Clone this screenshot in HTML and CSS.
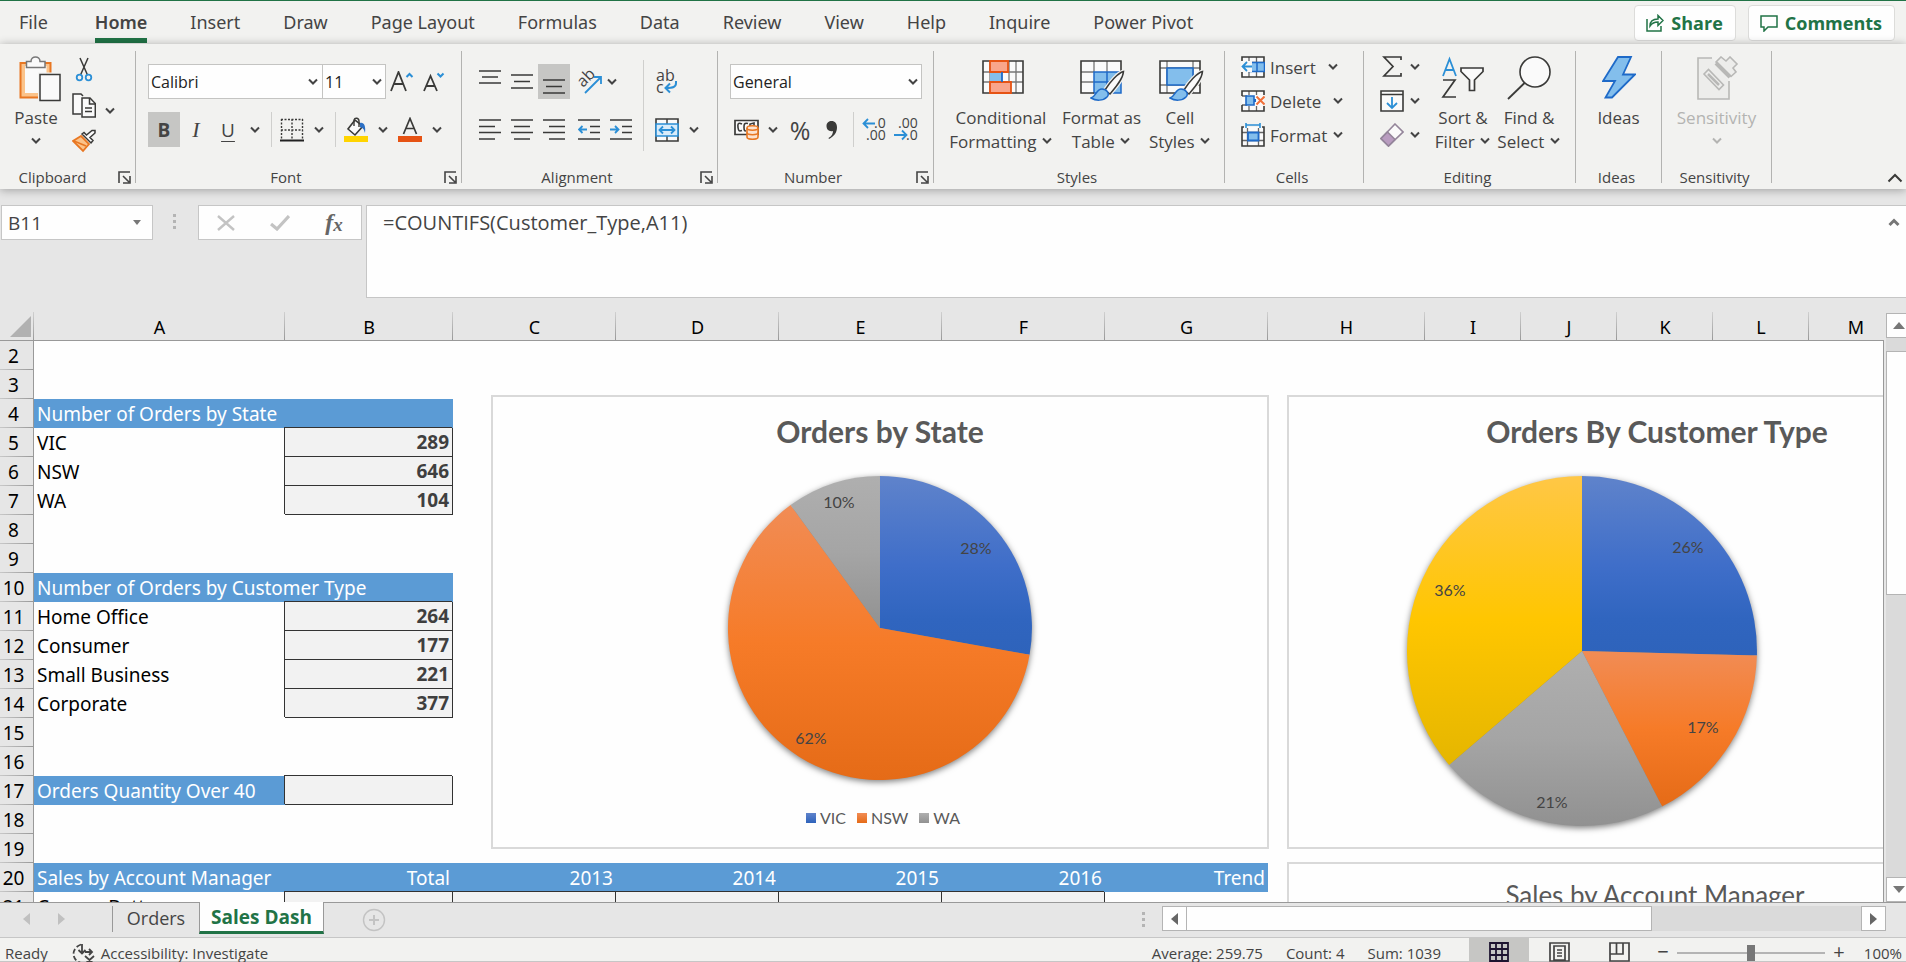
FILE: index.html
```html
<!DOCTYPE html>
<html lang="en">
<head>
<meta charset="utf-8">
<title>Sales Dash</title>
<link rel="stylesheet" href="styles.css">
</head>
<body>
<svg class="defs" width="0" height="0" aria-hidden="true">
  <symbol id="chev" viewBox="0 0 12 8"><path d="M2 1.5l4 4 4-4" fill="none" stroke="currentColor" stroke-width="2"/></symbol>
  <symbol id="launch" viewBox="0 0 13 13"><path d="M1 12V1h11M5 5l6 6M12 5v7H5" fill="none" stroke="#444" stroke-width="1.6"/></symbol>
  <symbol id="brush" viewBox="0 0 36 32"><path d="M33.500 1.500C28 3 20 12 15 20l5 4C26 17 33 9 33.500 1.500z" fill="#fafafa" stroke="#f2f2f0" stroke-width="4"/><path d="M33.500 1.500C28 3 20 12 15 20l5 4C26 17 33 9 33.500 1.500z" fill="#fafafa" stroke="#3a3a38" stroke-width="1.500"/><path d="M1 28c5-1 5-9 11-9 5 0 8 5 5 8-4 4-11 4-16 1z" fill="#83beec" stroke="#1e6ac8" stroke-width="1.500"/></symbol>
  <linearGradient id="blue" x2="0" y2="1"><stop offset="0" stop-color="#5f83cb"/><stop offset=".5" stop-color="#3f6ec9"/><stop offset=".8" stop-color="#3065bf"/><stop offset="1" stop-color="#2e63bb"/></linearGradient>
  <linearGradient id="orange" x2="0" y2="1"><stop offset="0" stop-color="#f18c55"/><stop offset=".5" stop-color="#f67b28"/><stop offset="1" stop-color="#e56b17"/></linearGradient>
  <linearGradient id="gray" x2="0" y2="1"><stop offset="0" stop-color="#afafaf"/><stop offset=".5" stop-color="#a5a5a5"/><stop offset="1" stop-color="#919191"/></linearGradient>
  <linearGradient id="gold" x2="0" y2="1"><stop offset="0" stop-color="#ffc746"/><stop offset=".5" stop-color="#ffc600"/><stop offset="1" stop-color="#e5b600"/></linearGradient>
</svg>

<header class="top">
  <nav class="tabs">
    <button>File</button><button class="on">Home</button><button>Insert</button><button>Draw</button><button>Page Layout</button><button>Formulas</button><button>Data</button><button>Review</button><button>View</button><button>Help</button><button>Inquire</button><button>Power Pivot</button>
  </nav>
  <div class="actions">
    <button class="action"><svg width="18" height="18" viewBox="0 0 18 18" fill="none" stroke="#217346" stroke-width="1.500"><path d="M1 5v12h14v-5"/><path d="M4 12c0-5 3-7 8-7V1.500l5 5-5 5V8c-4 0-6 1-8 4z"/></svg>Share</button>
    <button class="action"><svg width="18" height="18" viewBox="0 0 18 18" fill="none" stroke="#217346" stroke-width="1.500"><path d="M1 2h16v11H8l-4 4v-4H1z"/></svg>Comments</button>
  </div>
</header>

<section class="ribbon">
  <div class="group g-clip">
    <div class="body">
      <button class="big paste">
        <svg width="42" height="46" viewBox="0 0 42 46" fill="none"><path d="M1.500 7h30v34.500h-30z" fill="#fbc38a" stroke="#e87722" stroke-width="2"/><path d="M6 10h21.500v27H6z" fill="#fafafa"/><path d="M7.500 11.500V5.500H12c0-6 9-6 9 0h5v6z" fill="#fafafa" stroke="#777" stroke-width="1.500"/><path d="M21 18.500h20v26H21z" fill="#fafafa" stroke="#f2f2f0" stroke-width="4"/><path d="M21 18.500h20v26H21z" fill="#fafafa" stroke="#3a3a38" stroke-width="1.500"/></svg>
        <span>Paste</span><svg class="chev"><use href="#chev"/></svg>
      </button>
      <div class="stack">
        <button aria-label="Cut"><svg width="24" height="25" viewBox="0 0 24 25" fill="none"><path d="M8 1l7.500 17M16 1L8.500 18" stroke="#3a3a38" stroke-width="1.500"/><circle cx="7.500" cy="20.500" r="2.800" stroke="#2b8fd6" stroke-width="1.800"/><circle cx="16.500" cy="20.500" r="2.800" stroke="#2b8fd6" stroke-width="1.800"/></svg></button>
        <button aria-label="Copy"><svg width="24" height="25" viewBox="0 0 24 25" fill="#fafafa" stroke="#3a3a38" stroke-width="1.500"><path d="M9 21H1V1h8l2 2"/><path d="M10 5h8l5.300 5.500V24H10z"/><path d="M17.500 5v6h6M13 15h7M13 18.500h7" fill="none"/></svg></button>
        <button aria-label="Format Painter"><svg width="24" height="24" viewBox="0 0 24 24" fill="none"><path d="M9 7L1 12l10 10 6-7z" fill="#fbc38a" stroke="#e87722" stroke-width="1.800"/><path d="M2 12l12 5" stroke="#e87722" stroke-width="1.500"/><path d="M10 5l9 9 2-2.500-3-3L23 4V1.500h-3L14.500 6 12 3.500z" fill="#fafafa" stroke="#3a3a38" stroke-width="1.500"/></svg></button>
      </div>
      <button class="drop" aria-label="Copy options"><svg class="chev"><use href="#chev"/></svg></button>
    </div>
    <div class="cap"><span>Clipboard</span><svg class="launch"><use href="#launch"/></svg></div>
  </div>

  <div class="group g-font">
    <div class="body rows">
      <div class="row">
        <label class="combo w-font"><select aria-label="Font"><option>Calibri</option></select><svg class="chev"><use href="#chev"/></svg></label>
        <label class="combo w-size"><select aria-label="Font size"><option>11</option></select><svg class="chev"><use href="#chev"/></svg></label>
        <button class="tool" aria-label="Increase font size"><svg width="24" height="22" viewBox="0 0 24 22" fill="none"><path d="M1 20L8.500 1 16 20M4 13h9" stroke="#3a3a38" stroke-width="1.800"/><path d="M16.500 6l3-3 3 3" stroke="#2b8fd6" stroke-width="2"/></svg></button>
        <button class="tool" aria-label="Decrease font size"><svg width="22" height="22" viewBox="0 0 22 22" fill="none"><path d="M1 20L7.500 5 14 20M3.500 15h8" stroke="#3a3a38" stroke-width="1.800"/><path d="M14.500 2.500l3 3 3-3" stroke="#2b8fd6" stroke-width="2"/></svg></button>
      </div>
      <div class="row">
        <button class="tool on b">B</button><button class="tool i">I</button><button class="tool u">U</button><button class="drop" aria-label="Underline options"><svg class="chev"><use href="#chev"/></svg></button>
        <i class="sep"></i>
        <button class="tool" aria-label="Borders"><svg width="24" height="24" viewBox="0 0 24 24" fill="none" stroke="#3a3a38"><path d="M1 1.500h22M1 12h22M1.500 1v20M12 1v20M22.500 1v20" stroke-width="1.400" stroke-dasharray="2 1.500"/><path d="M0 22.500h24" stroke="#222" stroke-width="2"/></svg></button><button class="drop" aria-label="Border options"><svg class="chev"><use href="#chev"/></svg></button>
        <i class="sep"></i>
        <button class="tool" aria-label="Fill color"><svg width="24" height="25" viewBox="0 0 24 25" fill="none"><path d="M11 3L4 12l7 6 8-9z" fill="#fafafa" stroke="#3a3a38" stroke-width="1.600"/><path d="M10 9V3c1-3 5-2 5 1v6" stroke="#3a3a38" stroke-width="1.400"/><path d="M16 6c4-1 6 3 5 10-1-4-2-5-5-6z" fill="#2b6fc4"/><path d="M0 19h24v6H0z" fill="#ffd400"/></svg></button><button class="drop" aria-label="Fill options"><svg class="chev"><use href="#chev"/></svg></button>
        <button class="tool" aria-label="Font color"><svg width="24" height="25" viewBox="0 0 24 25" fill="none"><path d="M5.500 17L12 1.500 18.500 17M8 11.500h8" stroke="#3a3a38" stroke-width="1.700"/><path d="M0 19h24v6H0z" fill="#e65314"/></svg></button><button class="drop" aria-label="Font color options"><svg class="chev"><use href="#chev"/></svg></button>
      </div>
    </div>
    <div class="cap"><span>Font</span><svg class="launch"><use href="#launch"/></svg></div>
  </div>

  <div class="group g-align">
    <div class="body cols">
      <div class="rows">
        <div class="row">
          <button class="tool" aria-label="Top align"><svg width="22" height="24" viewBox="0 0 22 24" stroke="#3a3a38" stroke-width="1.600"><path d="M0 1h22M3 7h16M0 13h22"/></svg></button><button class="tool" aria-label="Middle align"><svg width="22" height="24" viewBox="0 0 22 24" stroke="#3a3a38" stroke-width="1.600"><path d="M0 5h22M3 11.500h16M0 18h22"/></svg></button><button class="tool on" aria-label="Bottom align"><svg width="22" height="24" viewBox="0 0 22 24" stroke="#3a3a38" stroke-width="1.600"><path d="M0 10h22M3 16.500h16M0 23h22"/></svg></button>
          <button class="split" aria-label="Orientation"><svg class="glyph" width="25" height="25" viewBox="0 0 25 25" fill="none"><text transform="translate(6 19) rotate(-45)" font-size="16" fill="#444">ab</text><path d="M8 24L24 8M17 8h7v7" stroke="#2b8fd6" stroke-width="1.800"/></svg><svg class="chev"><use href="#chev"/></svg></button>
        </div>
        <div class="row">
          <button class="tool" aria-label="Align left"><svg width="22" height="21" viewBox="0 0 22 21" stroke="#3a3a38" stroke-width="1.600"><path d="M0 1h22M0 7.500h16M0 13.500h22M0 20h16"/></svg></button><button class="tool" aria-label="Center"><svg width="22" height="21" viewBox="0 0 22 21" stroke="#3a3a38" stroke-width="1.600"><path d="M0 1h22M3 7.500h16M0 13.500h22M3 20h16"/></svg></button><button class="tool" aria-label="Align right"><svg width="22" height="21" viewBox="0 0 22 21" stroke="#3a3a38" stroke-width="1.600"><path d="M0 1h22M6 7.500h16M0 13.500h22M6 20h16"/></svg></button><i class="gap"></i><button class="tool" aria-label="Decrease indent"><svg width="22" height="21" viewBox="0 0 22 21" fill="none" stroke="#3a3a38" stroke-width="1.600"><path d="M0 1h22M12 7.500h10M12 13.500h10M0 20h22"/><path d="M9 10.500H1M4.500 7L1 10.500 4.500 14" stroke="#2b8fd6" stroke-width="1.800"/></svg></button><button class="tool" aria-label="Increase indent"><svg width="22" height="21" viewBox="0 0 22 21" fill="none" stroke="#3a3a38" stroke-width="1.600"><path d="M0 1h22M12 7.500h10M12 13.500h10M0 20h22"/><path d="M0 10.500h8M5 7l3.500 3.500L5 14" stroke="#2b8fd6" stroke-width="1.800"/></svg></button>
        </div>
      </div>
      <i class="sep tall"></i>
      <div class="rows">
        <div class="row">
          <button class="tool" aria-label="Wrap text"><svg class="glyph" width="22" height="26" viewBox="0 0 22 26" fill="none"><text x="0" y="12" font-size="16" fill="#444">ab</text><text x="0" y="24" font-size="16" fill="#444">c</text><path d="M20 12v2c0 4-3 5-10 5M14 14.500L9.500 19l4.500 4.500" stroke="#2b8fd6" stroke-width="2"/></svg></button>
        </div>
        <div class="row">
          <button class="tool" aria-label="Merge and center"><svg width="24" height="24" viewBox="0 0 24 24" fill="none"><path d="M1 1h22v22H1z" fill="#fafafa" stroke="#3a3a38" stroke-width="1.600"/><path d="M12 1v5M12 18v5" stroke="#3a3a38" stroke-width="1.400"/><path d="M1 6h22v12H1z" fill="#d9ecfa" stroke="#2b8fd6" stroke-width="1.600"/><path d="M4.500 12h15M8 8.500L4.500 12 8 15.500M16 8.500l3.500 3.500-3.500 3.500" stroke="#2b8fd6" stroke-width="1.800"/></svg></button><button class="drop" aria-label="Merge options"><svg class="chev"><use href="#chev"/></svg></button>
        </div>
      </div>
    </div>
    <div class="cap"><span>Alignment</span><svg class="launch"><use href="#launch"/></svg></div>
  </div>

  <div class="group g-num">
    <div class="body rows">
      <div class="row"><label class="combo w-num"><select aria-label="Number format"><option>General</option></select><svg class="chev"><use href="#chev"/></svg></label></div>
      <div class="row">
        <button class="tool" aria-label="Accounting format"><svg width="25" height="21" viewBox="0 0 25 21" fill="none"><path d="M1 1.500h23v14H1z" fill="#fafafa" stroke="#3a3a38" stroke-width="1.700"/><path d="M8 5C4 3 3.500 5 4 8.500s1 4 4 3M14 4.500c-4-1-4 1-4 4s1 4 2 3M16 8V5l4-1v3" stroke="#3a3a38" stroke-width="1.600"/><path d="M13 9c0-3 11-3 11 0v9c0 3-11 3-11 0z" fill="#fce3d0" stroke="#e87722" stroke-width="1.600"/><path d="M13 9c0 3 11 3 11 0M13 13.500c0 3 11 3 11 0" stroke="#e87722" stroke-width="1.600"/></svg></button><button class="drop" aria-label="Accounting options"><svg class="chev"><use href="#chev"/></svg></button>
        <button class="tool pct">%</button><button class="tool" aria-label="Comma style"><svg width="12" height="20" viewBox="0 0 12 20"><path d="M5.500 1C9 1 11 3.500 11 7.500c0 5-3 9-8 11.500l-.5-1C6 16 7 13.500 7 11 3 12 .5 9.500.5 6S3 1 5.500 1z" fill="#3a3a38"/></svg></button>
        <i class="sep"></i>
        <button class="tool" aria-label="Increase decimal"><svg class="glyph" width="24" height="25" viewBox="0 0 24 25" fill="none"><path d="M13 6.500H1M6 2L1.500 6.500 6 11" stroke="#2b8fd6" stroke-width="1.800"/><text x="12" y="11" font-size="14" fill="#444">.0</text><text x="4" y="23" font-size="14" fill="#444">.00</text></svg></button><button class="tool" aria-label="Decrease decimal"><svg class="glyph" width="24" height="25" viewBox="0 0 24 25" fill="none"><text x="4" y="11" font-size="14" fill="#444">.00</text><text x="12" y="23" font-size="14" fill="#444">.0</text><path d="M0 18h12M8 13.500l4.500 4.500L8 22.500" stroke="#2b8fd6" stroke-width="1.800"/></svg></button>
      </div>
    </div>
    <div class="cap"><span>Number</span><svg class="launch"><use href="#launch"/></svg></div>
  </div>

  <div class="group g-styles">
    <div class="body cols">
      <button class="big w104">
        <svg width="42" height="46" viewBox="0 0 42 46" fill="none"><path d="M1 5h40v32H1z" fill="#fafafa"/><path d="M1 16h40M1 26h40M8 5v32M27 5v32M34 5v32" stroke="#777" stroke-width="1.300"/><path d="M1 5h40v32H1z" stroke="#3a3a38" stroke-width="1.600"/><path d="M8 5h18v11H8zM8 26h21v11H8z" fill="#f9a58b" stroke="#e65314" stroke-width="1.800"/><path d="M8 17h12v8H8z" fill="#83beec"/><path d="M20 16v10" stroke="#1e6ac8" stroke-width="1.800"/></svg>
        <span>Conditional</span><span>Formatting <svg class="chev"><use href="#chev"/></svg></span>
      </button>
      <button class="big w97">
        <svg width="46" height="46" viewBox="0 0 46 46" fill="none"><path d="M1 5h40v32H1z" fill="#fafafa"/><path d="M14 16h27v21H14z" fill="#83beec"/><path d="M1 16h13M1 26h13M14 5v11M27 5v11" stroke="#777" stroke-width="1.300"/><path d="M14 16h27v21H14zM14 26h27M27 16v21" stroke="#1e6ac8" stroke-width="1.500"/><path d="M14 37H1V5h40v11" stroke="#3a3a38" stroke-width="1.600"/><use href="#brush" x="10" y="14" width="36" height="32"/></svg>
        <span>Format as</span><span>Table <svg class="chev"><use href="#chev"/></svg></span>
      </button>
      <button class="big w60">
        <svg width="46" height="46" viewBox="0 0 46 46" fill="none"><path d="M1 5h40v32H1z" fill="#fafafa"/><path d="M1 12h40M1 29h40M8 5v32M34 5v32" stroke="#777" stroke-width="1.300"/><path d="M1 5h40v32H1z" stroke="#3a3a38" stroke-width="1.600"/><path d="M8 12h26v17H8z" fill="#83beec" stroke="#1e6ac8" stroke-width="1.600"/><use href="#brush" x="10" y="14" width="36" height="32"/></svg>
        <span>Cell</span><span>Styles <svg class="chev"><use href="#chev"/></svg></span>
      </button>
    </div>
    <div class="cap"><span>Styles</span></div>
  </div>

  <div class="group g-cells">
    <div class="body list">
      <button><svg width="24" height="24" viewBox="0 0 24 24" fill="none"><path d="M1 2h22v20H1z" fill="#fafafa"/><path d="M8 2v20M15.500 2v20M1 16h22M1 7.500h22" stroke="#666" stroke-width="1.300"/><path d="M1 6V2h22v20H1v-5" stroke="#3a3a38" stroke-width="1.600"/><path d="M8 7.500h15.500v9H8z" fill="#83beec" stroke="#1e6ac8" stroke-width="1.500"/><path d="M16 7.500v9" stroke="#1e6ac8" stroke-width="1.500"/><path d="M0 6h11v11H0z" fill="#f8f8f7"/><path d="M11 11.500H1M6 7l-4.500 4.500L6 16" stroke="#2b8fd6" stroke-width="1.800"/></svg><span>Insert</span><svg class="chev far"><use href="#chev"/></svg></button>
      <button><svg width="24" height="24" viewBox="0 0 24 24" fill="none"><path d="M1 2h22v20H1z" fill="#fafafa"/><path d="M8 2v4M15.500 2v4M8 17v5M15.500 17v5M1 7h5M1 16h5" stroke="#666" stroke-width="1.300"/><path d="M1 7V2h22v4M1 16v6h22v-5" stroke="#3a3a38" stroke-width="1.600"/><path d="M5 7h8v9H5z" fill="#83beec" stroke="#1e6ac8" stroke-width="1.600"/><path d="M13 11.500h2" stroke="#1e6ac8" stroke-width="3"/><path d="M15.500 7.500l8 8M23.500 7.500l-8 8" stroke="#f0703a" stroke-width="2"/></svg><span>Delete</span><svg class="chev far"><use href="#chev"/></svg></button>
      <button><svg width="24" height="24" viewBox="0 0 24 24" fill="none"><path d="M1 4h22v19H1z" fill="#fafafa"/><path d="M6.500 5v18M17.500 5v18M1 9.500h22M1 17.500h22" stroke="#666" stroke-width="1.300"/><path d="M3 4H1v19h22V4h-2" stroke="#3a3a38" stroke-width="1.600"/><path d="M7 9.500h10.500v8H7z" fill="#83beec" stroke="#1e6ac8" stroke-width="1.800"/><path d="M5 2h14M5 0v5M19 0v5" stroke="#2b8fd6" stroke-width="1.600"/></svg><span>Format</span><svg class="chev"><use href="#chev"/></svg></button>
    </div>
    <div class="cap"><span>Cells</span></div>
  </div>

  <div class="group g-edit">
    <div class="body cols">
      <div class="list">
        <button aria-label="AutoSum"><svg width="24" height="24" viewBox="0 0 24 24" fill="none"><path d="M21 5V2H4l9 9.500L4 21h17v-3" stroke="#3a3a38" stroke-width="1.700"/></svg><svg class="chev"><use href="#chev"/></svg></button>
        <button aria-label="Fill"><svg width="24" height="24" viewBox="0 0 24 24" fill="none"><path d="M1 2h22v20H1zM1 5.500h22" fill="#fafafa" stroke="#3a3a38" stroke-width="1.600"/><path d="M12 8v10.500M7 14l5 5 5-5" stroke="#2b8fd6" stroke-width="1.800"/></svg><svg class="chev"><use href="#chev"/></svg></button>
        <button aria-label="Clear"><svg width="24" height="24" viewBox="0 0 24 24" fill="none"><path d="M15 1l8 8L8.500 23l-7.500-7.500z" fill="#fafafa" stroke="#94859a" stroke-width="1.600"/><path d="M7.500 9l7.500 7.500L8.500 23 1 15.500z" fill="#b99cc0" stroke="#94859a" stroke-width="1.600"/></svg><svg class="chev"><use href="#chev"/></svg></button>
      </div>
      <button class="big w66">
        <svg width="44" height="46" viewBox="0 0 44 46" fill="none"><path d="M2 20L8.500 3 15 20M4 14h9" stroke="#2b8fd6" stroke-width="1.800"/><path d="M2 24h12L2 41h13" stroke="#3a3a38" stroke-width="1.700"/><path d="M20 12h22v3.500L33.500 24v10.500h-5V24L20 15.500z" fill="#fafafa" stroke="#3a3a38" stroke-width="1.700"/></svg>
        <span>Sort &amp;</span><span>Filter <svg class="chev"><use href="#chev"/></svg></span>
      </button>
      <button class="big w66">
        <svg width="46" height="46" viewBox="0 0 46 46" fill="none"><circle cx="29" cy="16" r="15" fill="#fafafa" stroke="#3a3a38" stroke-width="1.600"/><path d="M18.500 27L2 43" stroke="#3a3a38" stroke-width="1.800"/></svg>
        <span>Find &amp;</span><span>Select <svg class="chev"><use href="#chev"/></svg></span>
      </button>
    </div>
    <div class="cap"><span>Editing</span></div>
  </div>

  <div class="group g-ideas">
    <div class="body cols mid">
      <button class="big">
        <svg width="34" height="46" viewBox="0 0 34 46"><path d="M16 1h13L21 18.500h12L10 41.500H3.500L13 25H1z" fill="#83beec" stroke="#1e6ac8" stroke-width="1.800"/></svg>
        <span>Ideas</span>
      </button>
    </div>
    <div class="cap"><span>Ideas</span></div>
  </div>

  <div class="group g-sens">
    <div class="body cols mid">
      <button class="big" disabled>
        <svg width="44" height="46" viewBox="0 0 44 46" fill="#ededeb" stroke="#b8b8b6" stroke-width="1.600"><path d="M17 2H3v41h31V25"/><path d="M9 18l4.500-4.500L28.500 29 24 33.500z"/><path d="M13 18l11 11" stroke-width="2.500"/><path d="M31 5l4-4 7 7-4 4 3 4-5 4.500L21 6l5-5z"/><path d="M21 7l14 14" stroke-width="4"/></svg>
        <span>Sensitivity</span><svg class="chev"><use href="#chev"/></svg>
      </button>
    </div>
    <div class="cap"><span>Sensitivity</span></div>
  </div>

  <button class="collapse" aria-label="Collapse ribbon"><svg width="16" height="10" viewBox="0 0 16 10" fill="none"><path d="M1.500 8.500L8 2l6.500 6.500" stroke="#3a3a38" stroke-width="2"/></svg></button>
</section>

<section class="formula">
  <div class="namebox"><input aria-label="Name box" value="B11"><svg width="10" height="5" viewBox="0 0 10 5"><path d="M1 0h8L5 5z" fill="#777"/></svg></div>
  <i class="dots"></i>
  <div class="fx">
    <button aria-label="Cancel"><svg width="18" height="16" viewBox="0 0 18 16"><path d="M1 1l16 14M17 1L1 15" stroke="#c3c3c3" stroke-width="2.400"/></svg></button>
    <button aria-label="Enter"><svg width="20" height="16" viewBox="0 0 20 16" fill="none"><path d="M1 9l6 5L19 1" stroke="#c3c3c3" stroke-width="3.200"/></svg></button>
    <button class="fn" aria-label="Insert function">f<small>x</small></button>
  </div>
  <div class="bar"><textarea aria-label="Formula bar">=COUNTIFS(Customer_Type,A11)</textarea><svg width="12" height="9" viewBox="0 0 12 9" fill="none"><path d="M1.500 7L6 2.500 10.500 7" stroke="#777" stroke-width="3"/></svg></div>
</section>

<main class="sheet">
  <div class="pane">
    <table>
      <colgroup><col class="c-row"><col class="c-a"><col class="c-b"><col class="c-c"><col class="c-c"><col class="c-c"><col class="c-c"><col class="c-c"><col class="c-h"><col class="c-i"><col class="c-i"><col class="c-i"><col class="c-i"><col></colgroup>
      <thead><tr><th><svg width="22" height="22" viewBox="0 0 22 22"><path d="M22 0v21H1z" fill="#b1b1b1"/></svg></th><th>A</th><th>B</th><th>C</th><th>D</th><th>E</th><th>F</th><th>G</th><th>H</th><th>I</th><th>J</th><th>K</th><th>L</th><th>M</th></tr></thead>
      <tbody>
        <tr><th>2</th><td colspan="13"></td></tr>
        <tr><th>3</th><td colspan="13"></td></tr>
        <tr><th>4</th><td class="head" colspan="2">Number of Orders by State</td><td colspan="11"></td></tr>
        <tr><th>5</th><td>VIC</td><td class="box">289</td><td colspan="11"></td></tr>
        <tr><th>6</th><td>NSW</td><td class="box">646</td><td colspan="11"></td></tr>
        <tr><th>7</th><td>WA</td><td class="box">104</td><td colspan="11"></td></tr>
        <tr><th>8</th><td colspan="13"></td></tr>
        <tr><th>9</th><td colspan="13"></td></tr>
        <tr><th>10</th><td class="head" colspan="2">Number of Orders by Customer Type</td><td colspan="11"></td></tr>
        <tr><th>11</th><td>Home Office</td><td class="box">264</td><td colspan="11"></td></tr>
        <tr><th>12</th><td>Consumer</td><td class="box">177</td><td colspan="11"></td></tr>
        <tr><th>13</th><td>Small Business</td><td class="box">221</td><td colspan="11"></td></tr>
        <tr><th>14</th><td>Corporate</td><td class="box">377</td><td colspan="11"></td></tr>
        <tr><th>15</th><td colspan="13"></td></tr>
        <tr><th>16</th><td colspan="13"></td></tr>
        <tr><th>17</th><td class="head">Orders Quantity Over 40</td><td class="box"></td><td colspan="11"></td></tr>
        <tr><th>18</th><td colspan="13"></td></tr>
        <tr><th>19</th><td colspan="13"></td></tr>
        <tr><th>20</th><td class="head">Sales by Account Manager</td><td class="head num">Total</td><td class="head num">2013</td><td class="head num">2014</td><td class="head num">2015</td><td class="head num">2016</td><td class="head num">Trend</td><td colspan="6"></td></tr>
        <tr><th>21</th><td>Connor Betts</td><td class="box"></td><td class="box"></td><td class="box"></td><td class="box"></td><td class="box"></td><td></td><td colspan="6"></td></tr>
      </tbody>
    </table>
    <div class="charts">
      <figure class="chart one">
        <figcaption>Orders by State</figcaption>
        <svg width="320" height="332" viewBox="-160 -166 320 332">
          <g class="pie"><path fill="url(#blue)" d="M0 0V-152A152 152 0 0 1 149.600 26.700z"/><path fill="url(#orange)" d="M0 0L149.600 26.700A152 152 0 1 1 -89.400 -122.900z"/><path fill="url(#gray)" d="M0 0L-89.400 -122.900A152 152 0 0 1 0 -152z"/></g>
          <text x="96" y="-74">28%</text><text x="-69" y="116">62%</text><text x="-41" y="-120">10%</text>
        </svg>
        <ul class="legend"><li class="k-blue">VIC</li><li class="k-orange">NSW</li><li class="k-gray">WA</li></ul>
      </figure>
      <figure class="chart two">
        <figcaption>Orders By Customer Type</figcaption>
        <svg width="360" height="360" viewBox="-180 -180 360 360">
          <g class="pie"><path fill="url(#blue)" d="M0 0V-175A175 175 0 0 1 174.900 4.600z"/><path fill="url(#orange)" d="M0 0L174.900 4.600A175 175 0 0 1 80 155.600z"/><path fill="url(#gray)" d="M0 0L80 155.600A175 175 0 0 1 -132.900 113.900z"/><path fill="url(#gold)" d="M0 0L-132.900 113.900A175 175 0 0 1 0 -175z"/></g>
          <text x="106" y="-98">26%</text><text x="121" y="82">17%</text><text x="-30" y="157">21%</text><text x="-132" y="-55">36%</text>
        </svg>
      </figure>
      <figure class="chart three"><figcaption>Sales by Account Manager</figcaption></figure>
    </div>
  </div>
  <div class="vscroll">
    <button aria-label="Scroll up"><svg width="12" height="7" viewBox="0 0 12 7"><path d="M6 0l6 7H0z" fill="#777"/></svg></button>
    <i class="thumb"></i>
    <button aria-label="Scroll down"><svg width="12" height="7" viewBox="0 0 12 7"><path d="M6 7l6-7H0z" fill="#777"/></svg></button>
  </div>
</main>

<nav class="sheets">
  <button class="arrow" aria-label="Previous sheet"><svg width="7" height="12" viewBox="0 0 7 12"><path d="M7 0v12L0 6z" fill="#c0c0c0"/></svg></button>
  <button class="arrow" aria-label="Next sheet"><svg width="7" height="12" viewBox="0 0 7 12"><path d="M0 0v12l7-6z" fill="#c0c0c0"/></svg></button>
  <button class="tab">Orders</button><button class="tab on">Sales Dash</button>
  <button class="add" aria-label="New sheet"><svg width="24" height="24" viewBox="0 0 24 24" fill="none" stroke="#c3c3c3"><circle cx="12" cy="12" r="10.500" stroke-width="1.400"/><path d="M7 12h10M12 7v10" stroke-width="2"/></svg></button>
  <i class="dots"></i>
  <div class="hscroll">
    <button aria-label="Scroll left"><svg width="7" height="12" viewBox="0 0 7 12"><path d="M7 0v12L0 6z" fill="#666"/></svg></button>
    <i class="thumb"></i>
    <button aria-label="Scroll right"><svg width="7" height="12" viewBox="0 0 7 12"><path d="M0 0v12l7-6z" fill="#666"/></svg></button>
  </div>
</nav>

<footer class="status">
  <span>Ready</span>
  <span class="acc"><svg width="24" height="22" viewBox="0 0 24 22" fill="none" stroke="#444" stroke-width="1.800"><path d="M9 1.500C-1 5-1 17 9 20" stroke-dasharray="5 2.500"/><path d="M10 1v9M6.500 7l3.500 3.500L13.500 7M13 9h7M17 6l3 3-3 3M13 13l9 8M22 13l-9 8"/></svg>Accessibility: Investigate</span>
  <span class="stat push">Average: 259.75</span><span class="stat">Count: 4</span><span class="stat">Sum: 1039</span>
  <button class="view on" aria-label="Normal view"><svg width="20" height="20" viewBox="0 0 20 20" fill="none" stroke="#1d1330" stroke-width="1.800"><path d="M1 1h18v18H1zM7 1v18M13 1v18M1 7h18M1 13h18"/></svg></button>
  <button class="view" aria-label="Page layout view"><svg width="21" height="20" viewBox="0 0 21 20" fill="none" stroke="#444" stroke-width="1.700"><path d="M1 1h19v18H1zM5 4h11v14H5zM8 8h5M8 11h5M8 14h5"/></svg></button>
  <button class="view" aria-label="Page break preview"><svg width="21" height="20" viewBox="0 0 21 20" fill="none" stroke="#444" stroke-width="1.700"><path d="M1 1h19v18H1zM1 12h13V1M7.500 1v11"/></svg></button>
  <button class="zoom">−</button><input type="range" aria-label="Zoom" min="0" max="100" value="50"><button class="zoom">+</button>
  <span class="level">100%</span>
</footer>
</body>
</html>
```
FILE: styles.css
```css
* { box-sizing: border-box; }
body {
  margin: 0;
  height: 100vh;
  display: flex;
  flex-direction: column;
  overflow: hidden;
  background: #e6e6e6;
  color: #444;
  font: 17px "Open Sans", "Noto Sans", sans-serif;
}
button, input, select, textarea { font: inherit; color: inherit; margin: 0; border-radius: 0; }
button { background: none; border: 0; padding: 0; white-space: nowrap; }
svg { display: block; flex: none; }
i { display: block; flex: none; }
.defs { position: absolute; }
.glyph { overflow: visible; }

/* Ribbon tabs */
.top {
  display: flex;
  justify-content: space-between;
  height: 44px;
  background: #f2f2f0;
  border-top: 1px solid #217346;
}
.tabs { display: flex; gap: 43px; padding-left: 19px; font-family: "Noto Sans", sans-serif; font-size: 18px; }
.tabs button { height: 42px; padding: 6px 0 0; border-bottom: 5px solid transparent; line-height: 31px; }
.tabs button.on { font-weight: 600; border-color: #217346; }
.tabs button:first-child { margin-right: 4px; }
.actions { display: flex; gap: 12px; padding: 4px 11px 0 0; }
.action {
  display: flex;
  align-items: center;
  gap: 7px;
  height: 36px;
  padding: 0 12px 0 11px;
  background: #fefefe;
  border: 1px solid #dcdcda;
  border-radius: 4px;
  color: #217346;
  font-size: 18px;
  font-weight: 700;
}

/* Ribbon */
.ribbon {
  display: flex;
  height: 145px;
  flex: none;
  padding: 7px 0 6px;
  background: #f2f2f0;
  box-shadow: 0 1px 9px rgba(0, 0, 0, .32);
  position: relative;
}
.group { display: flex; flex-direction: column; flex: none; border-right: 1px solid #b3b3b1; }
.body { flex: 1; }
.g-clip { width: 136px; }
.g-font { width: 326px; }
.g-align { width: 256px; }
.g-num { width: 216px; }
.g-styles { width: 291px; }
.g-cells { width: 139px; }
.g-edit { width: 212px; }
.g-ideas { width: 86px; }
.g-sens { width: 110px; }
.cap {
  display: flex;
  height: 12px;
  line-height: 12px;
  font-size: 15px;
  padding-right: 4px;
}
.cap span { flex: 1; text-align: center; white-space: nowrap; }
.cap span:not(:last-child) { padding-right: 8px; }
.g-clip .cap span:not(:last-child) { padding-right: 13px; }
.launch { width: 13px; height: 13px; }
.chev { display: block; width: 12px; height: 8px; }
.big {
  display: flex;
  flex-direction: column;
  align-items: center;
  justify-content: flex-start;
  padding-top: 5px;
  line-height: 24px;
}
.big > span:nth-of-type(1) { margin-top: 4px; }
.big > .chev { margin-top: 7px; }
.big span .chev { display: inline-block; vertical-align: 3px; }
.big:disabled { color: #b4b4b2; }
.g-clip .body { display: grid; grid-template-columns: 72px 24px 28px; }
.g-clip .drop { width: auto; }
.paste svg:first-child { margin-left: 8px; }
.stack { display: flex; flex-direction: column; gap: 11px; padding-top: 6px; }
.drop { display: flex; align-items: center; justify-content: center; width: 22px; }
.rows { display: flex; flex-direction: column; gap: 13px; padding: 13px 0 0 12px; }
.row { display: flex; height: 35px; }
.cols { display: flex; align-items: flex-start; }
.cols .rows { padding-top: 13px; }
.g-align .rows:first-child { width: 181px; }
.g-align .rows:last-child { padding-left: 7px; }
.mid { justify-content: center; }
.tool { display: flex; align-items: center; justify-content: center; width: 32px; flex: none; }
.tool.on { background: #c6c6c4; }
.tool.b { font-size: 19px; font-weight: 700; }
.tool.i { font: italic 22px "Liberation Serif", serif; }
.tool.u { font-size: 19px; text-decoration: underline; text-underline-offset: 4px; }
.tool.pct { font-size: 25px; }
.split { display: flex; align-items: center; gap: 4px; padding-left: 7px; }
.gap { width: 3px; }
.sep { width: 1px; margin: 0 4px 0 5px; background: #cfcfcd; }
.sep.tall { height: 91px; margin: 9px 0 0; }
.combo { display: grid; align-items: center; }
.combo > * { grid-area: 1 / 1; }
.combo .chev { justify-self: end; margin-right: 3px; }
.combo select {
  appearance: none;
  width: 100%;
  height: 35px;
  padding: 2px;
  background: #fefefe;
  border: 1px solid #c4c4c2;
  color: #222;
  font-size: 16px;
}
.w-font { width: 174px; }
.w-size { width: 64px; }
.w-font select { border-right: 0; }
.w-num { width: 192px; }
.w104 { width: 104px; }
.w97 { width: 97px; }
.w60 { width: 60px; }
.w66 { width: 66px; }
.g-styles .body { padding-left: 15px; }
.g-styles .big > svg:first-child { margin-left: 3px; }
.list { display: flex; flex-direction: column; padding-left: 16px; }
.list button { display: flex; align-items: center; gap: 5px; height: 34px; padding-bottom: 2px; }
.list .far { margin-left: 6px; }
.g-edit .list { width: 66px; }
.collapse { margin-left: auto; padding-right: 3px; align-self: flex-end; }

/* Formula bar */
.formula { display: flex; flex: none; height: 108px; padding-top: 16px; color: #444; }
.namebox {
  display: flex;
  align-items: center;
  width: 152px;
  height: 35px;
  margin-left: 1px;
  padding: 0 10px 0 6px;
  background: #fefefe;
  border: 1px solid #c6c6c6;
}
.namebox input { width: 100%; min-width: 0; flex: 1; border: 0; padding: 0; background: none; font-size: 19px; }
.dots {
  width: 3px;
  height: 15px;
  background: repeating-linear-gradient(#b4b4b4 0 3px, transparent 3px 6px);
}
.formula .dots { margin: 9px 22px 0 20px; }
.fx { display: flex; width: 164px; height: 35px; background: #fefefe; border: 1px solid #c6c6c6; }
.fx button { flex: 1; display: flex; align-items: center; justify-content: center; }
.fx .fn { font: italic bold 24px "Liberation Serif", serif; color: #666; }
.fn small { font-size: 19px; padding-top: 4px; }
.bar {
  display: flex;
  flex: 1;
  height: 93px;
  margin-left: 4px;
  padding: 0 6px 0 16px;
  background: #fefefe;
  border: 1px solid #c6c6c6;
  border-right: 0;
}
.bar textarea { flex: 1; border: 0; padding: 4px 0; background: none; resize: none; font-size: 20px; line-height: 26px; }
.bar svg { margin-top: 12px; }

/* Grid */
.sheet { display: flex; flex: 1; min-height: 0; margin-top: 15px; }
.pane { position: relative; flex: 1; overflow: hidden; }
table { width: 100%; table-layout: fixed; border-collapse: separate; border-spacing: 0; font-family: "Noto Sans", sans-serif; font-size: 19px; color: #000; }
.c-row { width: 34px; }
.c-a { width: 251px; }
.c-b { width: 168px; }
.c-c { width: 163px; }
.c-h { width: 157px; }
.c-i { width: 96px; }
th, td { height: 29px; padding: 0 3px; line-height: 28px; white-space: nowrap; overflow: hidden; }
td { text-align: left; background: #fefefe; }
td:last-child { border-right: 1px solid #999; }
thead th {
  font-weight: 400;
  font-size: 18px;
  padding-top: 2px;
  line-height: 26px;
  border-bottom: 1px solid #999;
  background: linear-gradient(#d0d0d0, #999) right / 1px 100% no-repeat #e6e6e6;
}
thead th:last-child { background: #e6e6e6; padding-right: 0; padding-left: 19px; }
thead svg { margin-left: 6px; }
tbody th {
  font-weight: 400;
  padding: 0 6px 0 0;
  border-right: 1px solid #999;
  background: linear-gradient(90deg, #c8c8c8, #999) bottom / 100% 1px no-repeat #e6e6e6;
}
td.head { background: #5b9bd5; color: #fff; }
td.num { text-align: right; }
td.box {
  text-align: right;
  background: #f2f2f2;
  border-right: 1px solid #333;
  border-bottom: 1px solid #333;
  box-shadow: -1px -1px 0 #333;
  color: #3f3f3f;
  font-weight: 700;
}
.charts { position: absolute; inset: 0 1px 0 0; overflow: hidden; color: #595959; font-family: Lato, sans-serif; }
.chart { position: absolute; margin: 0; background: #fefefe; border: 2px solid #d9d9d9; }
.one { left: 491px; top: 83px; width: 778px; height: 454px; }
.two { left: 1287px; top: 83px; width: 740px; height: 454px; }
.three { left: 1287px; top: 550px; width: 736px; height: 300px; }
figcaption { padding-top: 14px; text-align: center; font-size: 30px; line-height: 40px; font-weight: 700; }
.three figcaption { font-size: 26px; font-weight: 400; padding-top: 11px; }
.chart svg { overflow: visible; }
.chart text { font-size: 16px; fill: #444; text-anchor: middle; }
.pie { filter: drop-shadow(0 2px 3px rgba(0, 0, 0, .5)); }
.one svg { margin: 11px auto 12px; }
.two svg { margin: 20px 0 0 113px; }
.legend { display: flex; justify-content: center; gap: 11px; margin: 0; padding: 0 0 0 6px; list-style: none; font-size: 16px; line-height: 24px; }
.legend li { display: flex; align-items: center; gap: 4px; }
.legend li::before { content: ""; width: 10px; height: 10px; }
.k-blue::before { background: linear-gradient(#5f83cb, #2e63bb); }
.k-orange::before { background: linear-gradient(#f18c55, #e56b17); }
.k-gray::before { background: linear-gradient(#afafaf, #919191); }

/* Scroll bars */
.vscroll { display: flex; flex-direction: column; width: 20px; margin-left: 2px; margin-top: 1px; background: #dadada; }
.vscroll button, .vscroll .thumb, .hscroll button, .hscroll .thumb { background: #fefefe; border: 1px solid #b4b4b4; }
.vscroll button { display: flex; justify-content: center; align-items: center; height: 25px; border-right: 0; padding-left: 4px; }
.vscroll .thumb { height: 244px; margin-top: 13px; border-right: 0; }
.vscroll button:last-child { margin-top: auto; }
.sheets { display: flex; flex: none; height: 35px; border-top: 1px solid #999; }
.arrow { width: 35px; height: 32px; display: flex; align-items: center; justify-content: center; }
.arrow:first-child { margin-left: 9px; }
.tab { height: 31px; margin-top: -1px; line-height: 30px; font-size: 18px; }
.arrow + .tab { width: 87px; margin: 3px 0 0 33px; height: 26px; line-height: 20px; padding-bottom: 3px; border-left: 1px solid #999; }
.tab.on {
  width: 125px;
  height: 32px;
  background: #fefefe;
  border: 1px solid #999;
  border-width: 0 1px 3px;
  border-bottom-color: #217346;
  color: #217346;
  font-size: 19px;
  font-weight: 700;
}
.add { display: flex; align-items: center; height: 34px; margin-left: 38px; }
.sheets .dots { margin: 9px 17px 0 auto; }
.hscroll { display: flex; width: 724px; height: 25px; margin: 3px 20px 0 0; background: #dadada; }
.hscroll button { display: flex; justify-content: center; align-items: center; width: 25px; }
.hscroll .thumb { width: 466px; margin-left: -1px; }
.hscroll button:last-child { margin-left: auto; }

/* Status bar */
.status {
  display: flex;
  flex: none;
  height: 25px;
  overflow: hidden;
  padding: 0 4px 0 5px;
  background: #f2f2f0;
  border-top: 1px solid #c6c6c6;
  box-shadow: inset 0 -1px 0 #c6c6c6;
  font-size: 15px;
  line-height: 31px;
  white-space: nowrap;
}
.acc { display: flex; gap: 5px; margin-left: 24px; }
.acc svg { margin-top: 5px; }
.stat { margin-right: 23px; }
.push { margin-left: auto; }
.view { width: 60px; display: flex; justify-content: center; padding-top: 4px; }
.view.on { background: #c6c6c4; }
.stat + .view { margin-left: 5px; }
.zoom { width: 12px; font-size: 20px; line-height: 28px; margin: 0 8px; display: flex; justify-content: center; }
.status input {
  appearance: none;
  width: 148px;
  height: 16px;
  margin: 7px 0 0;
  background: linear-gradient(#b4b4b4, #b4b4b4) center / 100% 2px no-repeat;
}
.status input::-webkit-slider-thumb { appearance: none; width: 8px; height: 16px; background: #777; }
.level { width: 41px; margin-left: 8px; text-align: right; }
```
